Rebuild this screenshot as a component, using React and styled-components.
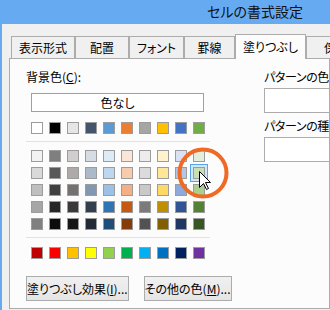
import React from 'react';
import styled, { createGlobalStyle } from 'styled-components';

const GlobalStyle = createGlobalStyle`
  html, body {
    margin: 0;
    padding: 0;
    width: 330px;
    height: 310px;
    overflow: hidden;
    background: #f0f0f0;
  }
  body {
    font-family: "Noto Sans CJK JP", "Liberation Sans", sans-serif;
    font-size: 12px;
    color: #000;
    font-feature-settings: "palt";
  }
`;

const THEME = ['#FFFFFF', '#000000', '#E7E6E6', '#44546A', '#5B9BD5', '#ED7D31', '#A5A5A5', '#FFC000', '#4472C4', '#70AD47'];
const TINTS = [
  ['#F2F2F2', '#7F7F7F', '#D0CECE', '#D6DCE4', '#DDEBF7', '#FCE4D6', '#EDEDED', '#FFF2CC', '#D9E1F2', '#E2EFDA'],
  ['#D9D9D9', '#595959', '#AEAAAA', '#ACB9CA', '#BDD7EE', '#F8CBAD', '#DBDBDB', '#FFE699', '#B4C6E7', '#C6E0B4'],
  ['#BFBFBF', '#404040', '#757171', '#8497B0', '#9BC2E6', '#F4B084', '#C9C9C9', '#FFD966', '#8EA9DB', '#A9D08E'],
  ['#A6A6A6', '#262626', '#3A3838', '#333F4F', '#2F75B5', '#C65911', '#7B7B7B', '#BF8F00', '#305496', '#548235'],
  ['#808080', '#0D0D0D', '#161616', '#222B35', '#1F4E78', '#833C0C', '#525252', '#806000', '#203764', '#375623'],
];
const STANDARD = ['#C00000', '#FF0000', '#FFC000', '#FFFF00', '#92D050', '#00B050', '#00B0F0', '#0070C0', '#002060', '#7030A0'];

const TABS = [
  { label: '表示形式', w: 64 },
  { label: '配置', w: 54 },
  { label: 'フォント', w: 55 },
  { label: '罫線', w: 51 },
  { label: '塗りつぶし', w: 71, active: true },
  { label: '保護', w: 60 },
];

const Window = styled.div`
  position: relative;
  width: 328px;
  height: 310px;
  border-left: 2px solid #66abf1;
  background: #f0f0f0;
  overflow: hidden;
`;

const TitleBar = styled.div`
  height: 24px;
  background: #66abf1;
  padding-left: 205px;
  font-size: 14px;
  line-height: 23px;
  color: #111;
  white-space: nowrap;
`;

const Body = styled.div`
  padding: 10px 0 0 7px;
`;

const TabRow = styled.div`
  display: flex;
  align-items: flex-end;
  height: 25px;
  margin-left: 2px;
  margin-bottom: -1px;
  position: relative;
  z-index: 1;
  white-space: nowrap;
`;

const Tab = styled.div`
  flex: none;
  box-sizing: border-box;
  width: ${(p) => p.$w}px;
  height: ${(p) => (p.$active ? 25 : 22)}px;
  margin-bottom: ${(p) => (p.$active ? 0 : 1)}px;
  border: 1px solid #acacac;
  border-bottom: none;
  background: ${(p) => (p.$active ? '#fcfcfc' : '#f0f0f0')};
  display: flex;
  align-items: center;
  justify-content: center;
  padding-bottom: ${(p) => (p.$active ? 2 : 0)}px;
  overflow: hidden;
`;

const Panel = styled.div`
  box-sizing: border-box;
  width: 321px;
  height: 251px;
  border: 1px solid #acacac;
  background: #fcfcfc;
  padding: 10px 0 0 16px;
  display: flex;
  overflow: hidden;
`;

const LeftCol = styled.div`
  flex: none;
  width: 184px;
  display: flex;
  flex-direction: column;
`;

const RightCol = styled.div`
  flex: none;
  width: 110px;
  margin-left: 54px;
  display: flex;
  flex-direction: column;
  letter-spacing: -0.4px;
`;

const Label = styled.div`
  height: 16px;
  line-height: 16px;
  white-space: nowrap;
  margin-top: ${(p) => p.$mt || 0}px;
`;

const U = styled.span`
  text-decoration: underline;
  text-underline-offset: 1px;
`;

const NoColor = styled.div`
  box-sizing: border-box;
  width: 173px;
  height: 19px;
  margin: 8px 0 0 5px;
  border: 1px solid #a0a0a0;
  background: #fff;
  text-align: center;
  line-height: 17px;
`;

const SwatchRow = styled.div`
  display: flex;
  gap: 6px;
  margin-left: 5px;
  margin-top: ${(p) => p.$mt}px;
`;

const TintGrid = styled.div`
  display: flex;
  flex-direction: column;
  gap: 5px;
  margin-top: 8px;
`;

const Swatch = styled.div`
  box-sizing: border-box;
  width: 12px;
  height: 12px;
  border: 1px solid #9c9c9c;
  background: ${(p) => p.$c};
  box-shadow: ${(p) => (p.$selected ? '0 0 0 2px #cfe6fb, 0 0 0 3px #5aa2ea' : 'none')};
`;

const Separator = styled.div`
  height: 1px;
  background: #e3e3e3;
  margin-top: ${(p) => p.$mt}px;
`;

const ButtonRow = styled.div`
  display: flex;
  gap: 15px;
  margin-top: 17px;
`;

const Button = styled.div`
  box-sizing: border-box;
  width: ${(p) => p.$w}px;
  height: 25px;
  border: 1px solid #acacac;
  background: linear-gradient(#f0f0f0, #e5e5e5);
  display: flex;
  align-items: center;
  justify-content: center;
  white-space: nowrap;
`;

const PatternBox = styled.div`
  box-sizing: border-box;
  width: 110px;
  height: 25px;
  margin-top: 3px;
  border: 1px solid #acacac;
  background: #fff;
`;

const Overlay = styled.svg`
  position: absolute;
  left: 0;
  top: 0;
  pointer-events: none;
`;

const App = () => (
  <>
    <GlobalStyle />
    <Window>
      <TitleBar>セルの書式設定</TitleBar>
      <Body>
        <TabRow>
          {TABS.map((t) => (
            <Tab key={t.label} $w={t.w} $active={t.active}>
              {t.label}
            </Tab>
          ))}
        </TabRow>
        <Panel>
          <LeftCol>
            <Label>
              背景色(<U>C</U>):
            </Label>
            <NoColor>色なし</NoColor>
            <SwatchRow $mt={10}>
              {THEME.map((c, i) => (
                <Swatch key={i} $c={c} />
              ))}
            </SwatchRow>
            <Separator $mt={7} />
            <TintGrid>
              {TINTS.map((row, r) => (
                <SwatchRow key={r} $mt={0}>
                  {row.map((c, i) => (
                    <Swatch key={i} $c={c} $selected={r === 1 && i === 9} />
                  ))}
                </SwatchRow>
              ))}
            </TintGrid>
            <Separator $mt={7} />
            <SwatchRow $mt={9}>
              {STANDARD.map((c, i) => (
                <Swatch key={i} $c={c} />
              ))}
            </SwatchRow>
            <ButtonRow>
              <Button $w={111}>
                塗りつぶし効果(<U>I</U>)...
              </Button>
              <Button $w={101}>
                その他の色(<U>M</U>)...
              </Button>
            </ButtonRow>
          </LeftCol>
          <RightCol>
            <Label>
              パターンの色(<U>A</U>):
            </Label>
            <PatternBox />
            <Label $mt={5}>
              パターンの種類(<U>P</U>):
            </Label>
            <PatternBox />
          </RightCol>
        </Panel>
      </Body>
      <Overlay width="330" height="310" viewBox="0 0 330 310">
        <circle cx="201" cy="173" r="23.5" fill="none" stroke="#ef6a24" strokeWidth="4" />
        <path
          d="M197.5 171.5 L197.5 187.5 L201.5 183.5 L204.5 189.5 L206.5 188.5 L203.5 182.5 L208.5 182.5 Z"
          fill="#fff"
          stroke="#000"
          strokeWidth="1"
          strokeLinejoin="miter"
        />
      </Overlay>
    </Window>
  </>
);

export default App;
